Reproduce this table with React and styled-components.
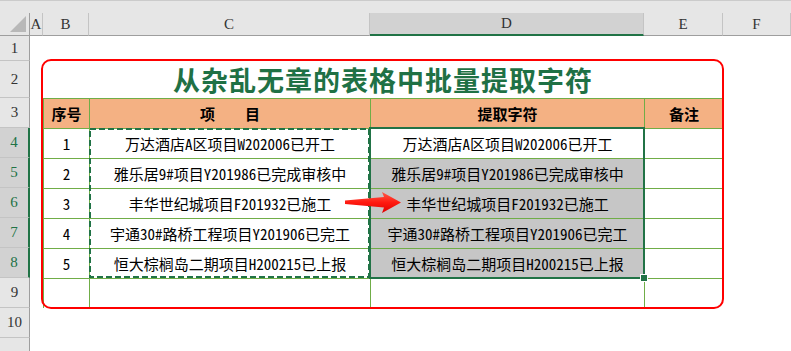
import React from 'react';
import styled, { createGlobalStyle } from 'styled-components';

const GlobalStyle = createGlobalStyle`
  html, body {
    margin: 0;
    padding: 0;
    background: #ffffff;
  }
`;

const GREEN_LINE = '#70ad47';
const EXCEL_GREEN = '#217346';
const HEAD_BG = '#e6e6e6';
const HEAD_SEL = '#d2d2d2';
const CELL_FONT = '"Noto Sans Mono CJK SC", "Noto Sans CJK SC", sans-serif';

const Sheet = styled.div`
  position: relative;
  width: 791px;
  height: 351px;
  overflow: hidden;
  display: grid;
  grid-template-columns: 30px 13px 46px 281px 274px 79px 68px;
  grid-template-rows: 13px 23px 25px 37px repeat(9, 30px);
  background: #ffffff;
`;

const TopStrip = styled.div`
  grid-column: 1 / -1;
  background: ${HEAD_BG};
  border-top: 1px solid #cbcbcb;
`;

const Corner = styled.div`
  background: ${HEAD_BG};
  border-right: 1px solid #9e9e9e;
  border-bottom: 1px solid #9e9e9e;
  display: flex;
  align-items: flex-end;
  justify-content: flex-end;
  padding: 0 3px 3px 0;
`;

const ColHead = styled.div`
  background: ${({ $active }) => ($active ? HEAD_SEL : HEAD_BG)};
  border-right: 1px solid #c4c4c4;
  border-bottom: ${({ $active }) => ($active ? `2px solid ${EXCEL_GREEN}` : '1px solid #9e9e9e')};
  display: flex;
  align-items: center;
  justify-content: center;
  font-family: "Liberation Serif", serif;
  font-size: 15px;
  color: #333333;
  box-sizing: border-box;
`;

const RowHead = styled.div`
  background: ${({ $active }) => ($active ? HEAD_SEL : HEAD_BG)};
  border-bottom: 1px solid #c4c4c4;
  border-right: ${({ $active }) => ($active ? `2px solid ${EXCEL_GREEN}` : '1px solid #9e9e9e')};
  display: flex;
  align-items: center;
  justify-content: center;
  font-family: "Liberation Serif", serif;
  font-size: 15px;
  color: ${({ $active }) => ($active ? EXCEL_GREEN : '#333333')};
  box-sizing: border-box;
`;

const Blank = styled.div`
  background: #ffffff;
`;

const TitleCell = styled.div`
  grid-column: span 4;
  display: flex;
  align-items: center;
  justify-content: center;
  font-family: "Noto Sans CJK SC", sans-serif;
  font-weight: 700;
  font-size: 27px;
  letter-spacing: 1px;
  color: #1f7145;
`;

const TableCell = styled.div`
  box-sizing: border-box;
  border-left: 1px solid ${GREEN_LINE};
  border-top: 1px solid ${GREEN_LINE};
  background: ${({ $fill }) => $fill || '#ffffff'};
  display: flex;
  align-items: center;
  justify-content: center;
  font-family: ${CELL_FONT};
  font-size: 15px;
  font-weight: ${({ $bold }) => ($bold ? 700 : 400)};
  color: #000000;
  white-space: pre;
`;

const RedFrame = styled.div`
  position: absolute;
  left: 41px;
  top: 59px;
  width: 683px;
  height: 250px;
  box-sizing: border-box;
  border: 2.5px solid #ff0000;
  border-radius: 10px;
  pointer-events: none;
`;

const Selection = styled.div`
  position: absolute;
  left: 369px;
  top: 127px;
  width: 276px;
  height: 152px;
  box-sizing: border-box;
  border: 2px solid ${EXCEL_GREEN};
  pointer-events: none;
`;

const FillHandle = styled.div`
  position: absolute;
  left: 640px;
  top: 274px;
  width: 6px;
  height: 6px;
  background: ${EXCEL_GREEN};
  border: 1px solid #ffffff;
`;

const Overlay = styled.svg`
  position: absolute;
  overflow: visible;
  pointer-events: none;
`;

const items = [
  { no: '1', src: '万达酒店A区项目W202006已开工' },
  { no: '2', src: '雅乐居9#项目Y201986已完成审核中' },
  { no: '3', src: '丰华世纪城项目F201932已施工' },
  { no: '4', src: '宇通30#路桥工程项目Y201906已完工' },
  { no: '5', src: '恒大棕榈岛二期项目H200215已上报' },
];

const cols = ['A', 'B', 'C', 'D', 'E', 'F'];

function SheetRow({ n, active, children }) {
  return (
    <>
      <RowHead $active={active}>{n}</RowHead>
      {children}
    </>
  );
}

export default function App() {
  return (
    <>
      <GlobalStyle />
      <Sheet>
        <TopStrip />
        <Corner>
          <svg width="16" height="16" viewBox="0 0 16 16">
            <polygon points="16,0 16,16 0,16" fill="#b8b8b8" />
          </svg>
        </Corner>
        {cols.map((c) => (
          <ColHead key={c} $active={c === 'D'}>{c}</ColHead>
        ))}

        <SheetRow n={1}>
          {cols.map((c) => <Blank key={c} />)}
        </SheetRow>

        <SheetRow n={2}>
          <Blank />
          <TitleCell>从杂乱无章的表格中批量提取字符</TitleCell>
          <Blank />
        </SheetRow>

        <SheetRow n={3}>
          <Blank />
          <TableCell $fill="#f4b183" $bold>序号</TableCell>
          <TableCell $fill="#f4b183" $bold>项　　目</TableCell>
          <TableCell $fill="#f4b183" $bold>提取字符</TableCell>
          <TableCell $fill="#f4b183" $bold>备注</TableCell>
          <Blank />
        </SheetRow>

        {items.map((it, i) => (
          <SheetRow key={it.no} n={i + 4} active>
            <Blank />
            <TableCell>{it.no}</TableCell>
            <TableCell>{it.src}</TableCell>
            <TableCell $fill={i > 0 ? '#c6c6c6' : undefined}>{it.src}</TableCell>
            <TableCell />
            <Blank />
          </SheetRow>
        ))}

        <SheetRow n={9}>
          <Blank />
          <TableCell />
          <TableCell />
          <TableCell />
          <TableCell />
          <Blank />
        </SheetRow>

        <SheetRow n={10}>
          {cols.map((c) => <Blank key={c} />)}
        </SheetRow>
        {/* row 11 starts at the bottom edge; its label falls outside the view */}
        <SheetRow>
          {cols.map((c) => <Blank key={c} />)}
        </SheetRow>

        <Overlay style={{ left: 89, top: 128 }} width="282" height="151">
          <rect x="1" y="1" width="279" height="148" fill="none"
            stroke={EXCEL_GREEN} strokeWidth="2" strokeDasharray="6 3" />
        </Overlay>
        <Selection />
        <FillHandle />
        <RedFrame />
        <Overlay style={{ left: 345, top: 192 }} width="56" height="21">
          <defs>
            <linearGradient id="arrowFill" x1="0" y1="0" x2="0" y2="1">
              <stop offset="0" stopColor="#ff5a4a" />
              <stop offset="0.5" stopColor="#ff1a10" />
              <stop offset="1" stopColor="#e00000" />
            </linearGradient>
          </defs>
          <polygon points="0,8.5 39,5 37,0 56,10.5 37,21 39,15.5 0,12"
            fill="url(#arrowFill)" />
        </Overlay>
      </Sheet>
    </>
  );
}
